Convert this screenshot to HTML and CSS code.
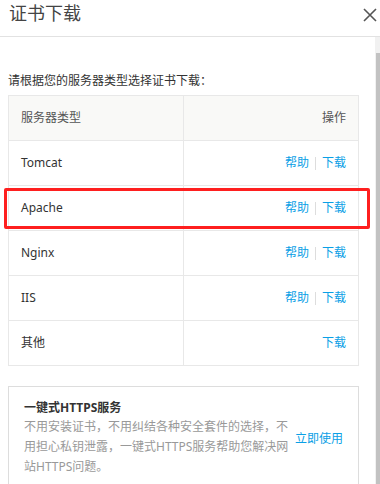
FILE: index.html
```html
<!DOCTYPE html>
<html>
<head>
  <title>证书下载</title>
  <link rel="stylesheet" href="styles.css">
</head>
<body>
  <div class="dialog">
    <div class="dialog-header">
      <h2>证书下载</h2>
      <span class="close">
        <svg width="14" height="14" viewBox="0 0 14 14">
          <path d="M1 1 L13 13 M13 1 L1 13" stroke="#555" stroke-width="1.6" fill="none"/>
        </svg>
      </span>
    </div>
    <div class="dialog-body">
      <div class="content">
        <p class="tip">请根据您的服务器类型选择证书下载：</p>
        <div class="table-wrap">
          <table class="cert-table">
            <tr>
              <th>服务器类型</th>
              <th class="ops">操作</th>
            </tr>
            <tr>
              <td>Tomcat</td>
              <td class="ops"><a href="#">帮助</a><span class="sep"></span><a href="#">下载</a></td>
            </tr>
            <tr>
              <td>Apache</td>
              <td class="ops"><a href="#">帮助</a><span class="sep"></span><a href="#">下载</a></td>
            </tr>
            <tr>
              <td>Nginx</td>
              <td class="ops"><a href="#">帮助</a><span class="sep"></span><a href="#">下载</a></td>
            </tr>
            <tr>
              <td>IIS</td>
              <td class="ops"><a href="#">帮助</a><span class="sep"></span><a href="#">下载</a></td>
            </tr>
            <tr>
              <td>其他</td>
              <td class="ops"><a href="#">下载</a></td>
            </tr>
          </table>
          <div class="highlight"></div>
        </div>
        <div class="promo">
          <div class="promo-text">
            <h3>一键式HTTPS服务</h3>
            <p>不用安装证书，不用纠结各种安全套件的选择，不用担心私钥泄露，一键式HTTPS服务帮助您解决网站HTTPS问题。</p>
          </div>
          <a class="promo-link" href="#">立即使用</a>
        </div>
      </div>
      <div class="scrollbar"><div class="thumb"></div></div>
    </div>
  </div>
</body>
</html>
```

FILE: styles.css
```css
body {
  margin: 0;
  font-family: "Noto Sans", "Noto Sans CJK SC", sans-serif;
  font-size: 12px;
  color: #333;
  background-color: #fff;
}
.dialog {
  width: 380px;
  height: 484px;
  display: flex;
  flex-direction: column;
  overflow: hidden;
}
.dialog-header {
  height: 35px;
  border-bottom: 1px solid #e2e2e2;
  display: flex;
  justify-content: space-between;
  align-items: flex-start;
  padding: 1px 3px 0 9px;
  box-sizing: content-box;
}
.dialog-header h2 {
  margin: 0;
  font-size: 18px;
  line-height: 24px;
  font-weight: normal;
  color: #444;
}
.close {
  margin-top: 7px;
  width: 14px;
  height: 14px;
  display: block;
}
.close svg {
  display: block;
}
.dialog-body {
  flex: 1;
  min-height: 0;
  display: flex;
  overflow: hidden;
}
.content {
  flex: 1;
  padding: 35px 16px 0 8px;
}
.tip {
  margin: 0 0 5px 0;
  line-height: 18px;
}
.table-wrap {
  position: relative;
}
.cert-table {
  width: 351px;
  border-collapse: collapse;
  table-layout: fixed;
}
.cert-table th,
.cert-table td {
  border: 1px solid #e8e8e8;
  height: 44px;
  padding: 0 12px;
  text-align: left;
  font-weight: normal;
  line-height: 18px;
}
.cert-table th {
  background-color: #f9f9f7;
  color: #555;
}
.cert-table .ops {
  text-align: right;
}
.cert-table a {
  color: #0aa0e6;
  text-decoration: none;
}
.sep {
  display: inline-block;
  width: 1px;
  height: 13px;
  background-color: #ddd;
  margin: 0 6px;
  vertical-align: middle;
}
.highlight {
  position: absolute;
  top: 93px;
  left: -4px;
  width: 366px;
  height: 41px;
  border: 3px solid #fe1f1f;
  border-radius: 2px;
  box-sizing: border-box;
  pointer-events: none;
}
.promo {
  margin-top: 20px;
  border: 1px solid #ddd;
  padding: 12px 15px;
  display: flex;
  align-items: center;
}
.promo-text {
  width: 268px;
}
.promo h3 {
  margin: 0;
  font-size: 12px;
  line-height: 18px;
  font-weight: bold;
  color: #333;
}
.promo p {
  margin: 0;
  line-height: 20px;
  color: #999;
}
.promo-link {
  margin-left: auto;
  color: #0aa0e6;
  text-decoration: none;
}
.scrollbar {
  width: 5px;
  background-color: #f1f1f1;
  padding: 16px 0 0 1px;
  display: flex;
  flex-direction: column;
  box-sizing: border-box;
}
.thumb {
  flex: 1;
  background-color: #c2c2c2;
}
```
